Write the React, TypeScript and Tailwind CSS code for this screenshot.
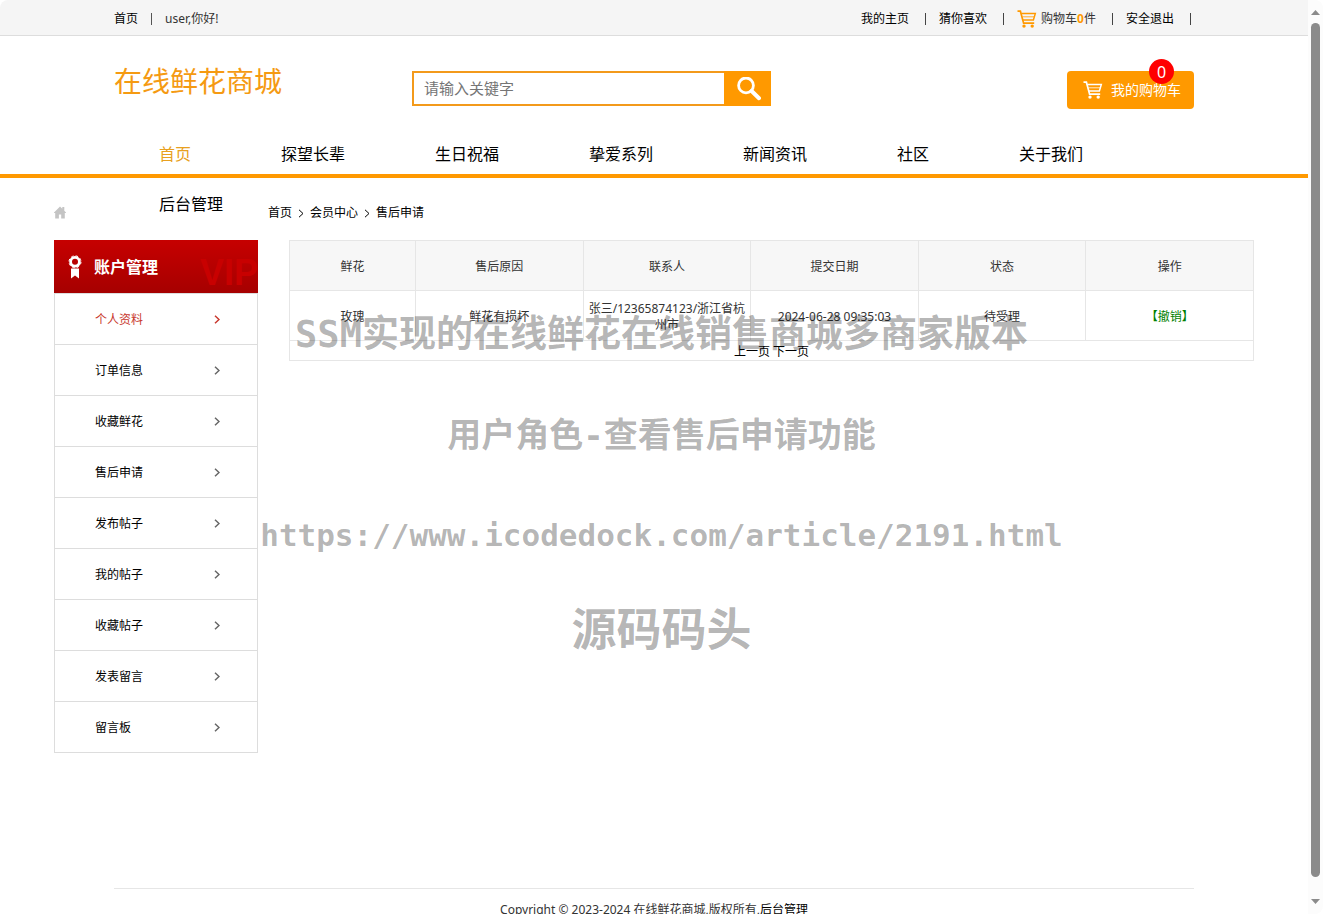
import React from 'react';

interface NavLink {
  label: string;
  active?: boolean;
}

const navLinks: NavLink[] = [
  { label: '首页', active: true },
  { label: '探望长辈' },
  { label: '生日祝福' },
  { label: '挚爱系列' },
  { label: '新闻资讯' },
  { label: '社区' },
  { label: '关于我们' },
  { label: '后台管理' },
];

const accountLinks: NavLink[] = [
  { label: '个人资料', active: true },
  { label: '订单信息' },
  { label: '收藏鲜花' },
  { label: '售后申请' },
  { label: '发布帖子' },
  { label: '我的帖子' },
  { label: '收藏帖子' },
  { label: '发表留言' },
  { label: '留言板' },
];

const crumbs = ['首页', '会员中心', '售后申请'];

const columns = ['鲜花', '售后原因', '联系人', '提交日期', '状态', '操作'];

const requests = [
  {
    flower: '玫瑰',
    reason: '鲜花有损坏',
    contact: '张三/12365874123/浙江省杭州市',
    date: '2024-06-28 09:35:03',
    status: '待受理',
  },
];

const CartIcon: React.FC<{ className?: string }> = ({ className = '' }) => (
  <svg viewBox="0 0 20 18" className={`h-[18px] w-5 shrink-0 ${className}`} fill="none" stroke="currentColor" aria-hidden="true">
    <path d="M0.5 1.2H3.4L6.6 13.2H17.2" strokeWidth="1.7" />
    <path d="M4.4 3.6H18.3L16.4 10H6" strokeWidth="1.5" />
    <path d="M5.4 6.8H17" strokeWidth="0.8" />
    <circle cx="7" cy="16.1" r="1.7" fill="currentColor" stroke="none" />
    <circle cx="15.2" cy="16.1" r="1.7" fill="currentColor" stroke="none" />
  </svg>
);

const SearchIcon: React.FC = () => (
  <svg viewBox="0 0 24 24" className="h-6 w-6" fill="none" stroke="currentColor" aria-hidden="true">
    <circle cx="9" cy="8.4" r="7.4" strokeWidth="2.8" />
    <path d="M14.6 14L22 21.2" strokeWidth="4" strokeLinecap="round" />
  </svg>
);

const HomeIcon: React.FC = () => (
  <svg viewBox="0 0 12 13" className="h-[13px] w-3 shrink-0 text-[#c4c4c4]" fill="currentColor" aria-hidden="true">
    <path d="M6 0.4L8.3 2.7V0.9H10.3V4.7L12 6.5V7H10.8V12.6H7.2V8.6H4.9V12.6H1.2V7H0V6.5Z" />
  </svg>
);

const MedalIcon: React.FC = () => (
  <svg viewBox="0 0 14 24" className="h-6 w-3.5 shrink-0" fill="currentColor" aria-hidden="true">
    <circle cx="7" cy="6.8" r="4.4" fill="none" stroke="currentColor" strokeWidth="2.8" />
    <circle cx="7" cy="6.8" r="6" fill="none" stroke="currentColor" strokeWidth="1" strokeDasharray="2.6 2.1" />
    <path d="M3 13.6H11V23.6L7 20.4L3 23.6Z" />
  </svg>
);

const Chevron: React.FC<{ className?: string; strokeWidth?: number }> = ({ className = '', strokeWidth = 1 }) => (
  <svg viewBox="0 0 6 9" className={`h-[9px] w-1.5 shrink-0 ${className}`} fill="none" stroke="currentColor" strokeWidth={strokeWidth} aria-hidden="true">
    <path d="M1 0.8L5 4.5L1 8.2" />
  </svg>
);

const Divider: React.FC = () => <span className="ml-4 h-3 w-px bg-[#444]"></span>;

const TopBar: React.FC = () => (
  <div className="border-b border-[#ddd] bg-[#f5f5f5]">
    <div className="mx-auto flex h-[35px] max-w-[1080px] items-center justify-between pt-0.5">
      <div className="flex items-center">
        <a href="#" className="text-black">首页</a>
        <span className="mx-[13px] h-3 w-px bg-[#555]"></span>
        <span>user,你好!</span>
      </div>
      <ul className="flex items-center gap-[13px] pr-[3px]">
        <li className="flex items-center"><a href="#" className="text-black">我的主页</a><Divider /></li>
        <li className="flex items-center"><a href="#" className="text-black">猜你喜欢</a><Divider /></li>
        <li className="flex items-center">
          <a href="#" className="flex items-center gap-1">
            <CartIcon className="text-[#f90]" />
            <span>购物车<b className="text-[#f90]">0</b>件</span>
          </a>
          <Divider />
        </li>
        <li className="flex items-center"><a href="#" className="text-black">安全退出</a><Divider /></li>
      </ul>
    </div>
  </div>
);

const Header: React.FC = () => (
  <header className="mx-auto flex h-[93px] max-w-[1080px] items-start">
    <a href="#" className="mt-[25px] w-[298px] shrink-0 text-[28px] leading-10 text-[#f59a12]">在线鲜花商城</a>
    <form className="mt-[35px] flex h-[35px] w-[359px]" onSubmit={(e) => e.preventDefault()}>
      <input
        type="text"
        aria-label="搜索"
        placeholder="请输入关键字"
        className="min-w-0 flex-1 border-2 border-r-0 border-[#f39a1b] bg-white px-2.5 pb-0.5 text-[15px] outline-none placeholder:text-[#757575]"
      />
      <button type="submit" aria-label="搜索" className="flex w-[47px] items-center justify-center bg-[#f90] pl-0.5 text-white">
        <SearchIcon />
      </button>
    </form>
    <a href="#" className="relative mt-[35px] ml-auto flex h-[38px] w-[127px] items-center gap-2 rounded bg-[#f90] pl-4 text-sm text-white">
      <CartIcon />
      我的购物车
      <span className="absolute -top-3 right-5 flex h-[25px] w-[25px] items-center justify-center rounded-full bg-[#f00] text-base">0</span>
    </a>
  </header>
);

// The last link does not fit on the line and wraps below the orange rule
const MainNav: React.FC = () => (
  <nav className="h-[49px] border-b-4 border-[#f90]">
    <ul className="mx-auto flex max-w-[1080px] flex-wrap text-base leading-[50px]">
      {navLinks.map((link) => (
        <li key={link.label} className="px-[45px]">
          <a href="#" className={link.active ? 'text-[#e8a020]' : 'text-black'}>{link.label}</a>
        </li>
      ))}
    </ul>
  </nav>
);

const Breadcrumb: React.FC = () => (
  <div className="flex items-start pt-6 pb-[17px] leading-5 text-black">
    <a href="#" aria-label="首页" className="mt-1"><HomeIcon /></a>
    <ol className="ml-[202px] flex items-center gap-1.5 pt-px">
      {crumbs.map((crumb, index) => (
        <li key={crumb} className="flex items-center gap-1.5">
          {index > 0 && <Chevron />}
          <a href="#">{crumb}</a>
        </li>
      ))}
    </ol>
  </div>
);

const Sidebar: React.FC = () => (
  <aside className="w-[204px] shrink-0">
    <div className="flex h-[53px] items-center overflow-hidden bg-linear-to-b from-[#c60000] to-[#a60000] pl-3.5 text-white">
      <MedalIcon />
      <h2 className="ml-3 text-base font-bold">账户管理</h2>
      <span className="mt-3 ml-auto font-['Liberation_Sans',sans-serif] text-4xl leading-none font-bold text-[#c80000]" aria-hidden="true">VIP</span>
    </div>
    <ul className="border border-b-0 border-[#ddd] text-black">
      {accountLinks.map((link) => (
        <li key={link.label}>
          <a
            href="#"
            className={`flex h-[51px] items-center justify-between border-b border-[#ddd] pr-[37px] pl-10 ${link.active ? 'text-[#c8372d]' : ''}`}
          >
            <span className="pt-0.5">{link.label}</span>
            <Chevron className={link.active ? 'text-[#c8372d]' : 'text-[#666]'} strokeWidth={1.5} />
          </a>
        </li>
      ))}
    </ul>
  </aside>
);

const Cell: React.FC<{ children: React.ReactNode }> = ({ children }) => (
  <td className="border border-[#e6e6e6] px-0.5 pt-0.5">{children}</td>
);

const RequestTable: React.FC = () => (
  <div className="ml-[31px] min-w-0 flex-1">
    <table className="w-full table-fixed border-collapse text-center leading-4">
      <thead>
        <tr className="h-[50px] bg-[#f7f7f7]">
          {columns.map((column, index) => (
            <th key={column} className={`border border-[#e6e6e6] pt-0.5 font-normal ${index === 0 ? 'w-[126px]' : ''}`}>{column}</th>
          ))}
        </tr>
      </thead>
      <tbody>
        {requests.map((request) => (
          <tr key={request.date} className="h-[50px]">
            <Cell>{request.flower}</Cell>
            <Cell>{request.reason}</Cell>
            <Cell>{request.contact}</Cell>
            <Cell>{request.date}</Cell>
            <Cell>{request.status}</Cell>
            <Cell><a href="#" className="text-[#008000]">【撤销】</a></Cell>
          </tr>
        ))}
        <tr className="h-5">
          <td colSpan={6} className="border border-[#e6e6e6] pt-0.5 text-black">
            <a href="#">上一页</a> <a href="#">下一页</a>
          </td>
        </tr>
      </tbody>
    </table>
  </div>
);

const Watermark: React.FC = () => (
  <div className="pointer-events-none absolute inset-x-0 top-[305px] flex flex-col items-center font-['DejaVu_Sans_Mono','Noto_Sans_CJK_SC',monospace] font-bold whitespace-nowrap text-[#000]/30">
    <p className="text-[37px] leading-[60px]">SSM实现的在线鲜花在线销售商城多商家版本</p>
    <p className="mt-10 text-[34px] leading-[60px]">用户角色-查看售后申请功能</p>
    <p className="mt-10 text-[31px] leading-[60px]">https://www.icodedock.com/article/2191.html</p>
    <p className="mt-9 text-[45px] leading-[60px]">源码码头</p>
  </div>
);

const Scrollbar: React.FC = () => (
  <div className="flex w-[15px] shrink-0 flex-col items-center justify-between bg-[#fcfcfc] py-2.5 text-[#8b8b8b]" aria-hidden="true">
    <svg viewBox="0 0 9 5" className="h-[5px] w-[9px]" fill="currentColor"><path d="M0 5L4.5 0L9 5Z" /></svg>
    <div className="mt-2 mb-[22px] w-[9px] flex-1 rounded-full bg-[#8b8b8b]"></div>
    <svg viewBox="0 0 9 5" className="h-[5px] w-[9px]" fill="currentColor"><path d="M0 0L4.5 5L9 0Z" /></svg>
  </div>
);

const App: React.FC = () => {
  return (
    <div className="relative flex h-screen overflow-hidden rounded-lg bg-white font-['Noto_Sans','Noto_Sans_CJK_SC',sans-serif] text-xs text-[#333]">
      <div className="min-w-0 flex-1">
        <TopBar />
        <Header />
        <MainNav />
        <main className="mx-auto max-w-[1200px] pb-[135px]">
          <Breadcrumb />
          <div className="flex items-start">
            <Sidebar />
            <RequestTable />
          </div>
        </main>
        <footer className="mx-auto max-w-[1080px] border-t border-[#e6e6e6] py-[11px] text-center leading-5">
          Copyright © 2023-2024 在线鲜花商城,版权所有,<a href="#" className="text-black">后台管理</a>
        </footer>
      </div>
      <Scrollbar />
      <Watermark />
    </div>
  );
};

export default App;
